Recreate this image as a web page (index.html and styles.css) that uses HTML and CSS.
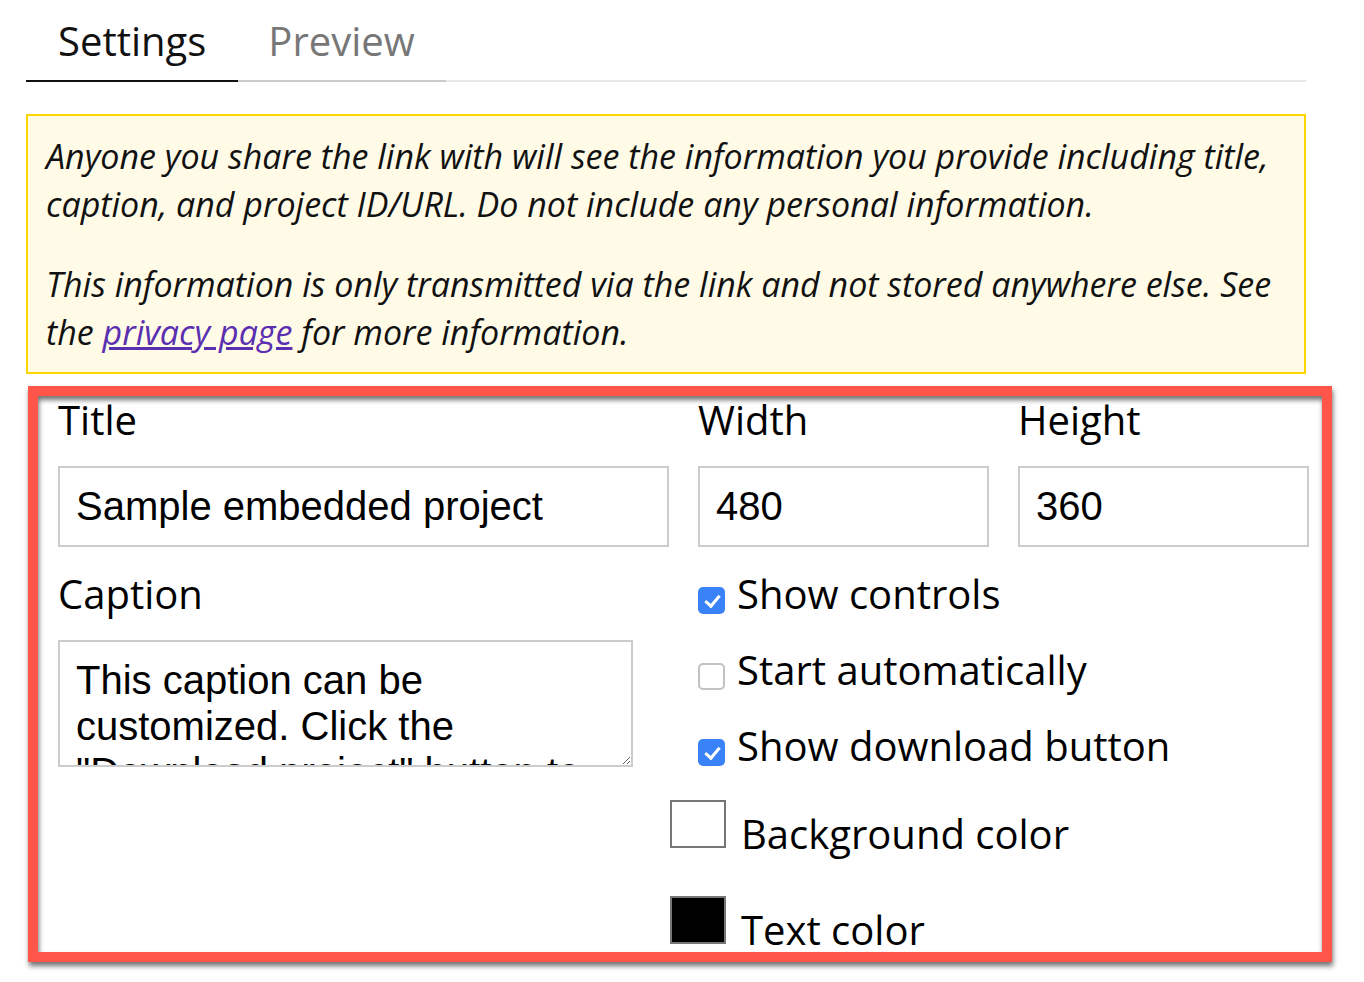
FILE: index.html
```html
<!DOCTYPE html>
<html lang="en">
<head>
<meta charset="utf-8">
<title>Embed settings</title>
<link rel="stylesheet" href="styles.css">
</head>
<body>
<main class="page">
  <nav class="tabs">
    <span class="tab tab-active">Settings</span>
    <span class="tab">Preview</span>
  </nav>

  <div class="notice">
    <p>Anyone you share the link with will see the information you provide including title, caption, and project ID/URL. Do not include any personal information.</p>
    <p>This information is only transmitted via the link and not stored anywhere else. See the <a class="notice-link" href="#privacy">privacy page</a> for more information.</p>
  </div>

  <form class="form">
    <div class="field">
      <label class="field-label" for="title">Title</label>
      <input class="text-input" id="title" type="text" value="Sample embedded project">
    </div>
    <div class="field">
      <label class="field-label" for="width">Width</label>
      <input class="text-input" id="width" type="text" value="480">
    </div>
    <div class="field">
      <label class="field-label" for="height">Height</label>
      <input class="text-input" id="height" type="text" value="360">
    </div>

    <div class="field">
      <label class="field-label" for="caption">Caption</label>
      <textarea class="text-area" id="caption">This caption can be customized. Click the "Download project" button to download the project.</textarea>
    </div>

    <div class="options">
      <label class="check-row"><input class="check" type="checkbox" checked><span>Show controls</span></label>
      <label class="check-row"><input class="check" type="checkbox"><span>Start automatically</span></label>
      <label class="check-row check-row-last"><input class="check" type="checkbox" checked><span>Show download button</span></label>
      <label class="color-row color-row-first"><input class="swatch" type="color" value="#ffffff"><span>Background color</span></label>
      <label class="color-row"><input class="swatch" type="color" value="#000000"><span>Text color</span></label>
    </div>
  </form>

  <div class="highlight"></div>
</main>
</body>
</html>
```

FILE: styles.css
```css
html, body {
  margin: 0;
  padding: 0;
  background: #ffffff;
}

body {
  font-family: "Open Sans", "Noto Sans", sans-serif;
  color: #000;
  overflow: hidden;
}

.page {
  position: relative;
  width: 1280px;
  padding-left: 26px;
  height: 982px;
}

/* Tabs */
.tabs {
  display: flex;
  border-bottom: 2px solid #e8e8e8;
}

.tab {
  padding: 0 32px;
  height: 80px;
  line-height: 82px;
  font-size: 40px;
  color: #777777;
  border-bottom: 2px solid #cccccc;
  margin-bottom: -2px;
}

.tab + .tab {
  padding: 0 31px 0 30px;
}

.tab-active {
  color: #111111;
  border-bottom-color: #111111;
}

/* Notice */
.notice {
  margin-top: 32px;
  border: 2px solid #ffd500;
  background: #fffbe7;
  padding: 16px 18px;
  font-style: italic;
  font-size: 34px;
  line-height: 48px;
  color: #111;
}

.notice p {
  margin: 0;
}

.notice p + p {
  margin-top: 32px;
}

.notice-link {
  color: #5a2fb0;
  text-decoration: underline;
}

/* Form */
.form {
  margin-top: 19px;
  padding-left: 32px;
  display: grid;
  grid-template-columns: 611px 291px 291px;
  column-gap: 29px;
  row-gap: 20px;
  align-items: start;
}

.field-label {
  display: block;
  font-size: 40px;
  line-height: 54px;
  margin-bottom: 19px;
}

.text-input {
  box-sizing: border-box;
  display: block;
  width: 100%;
  height: 81px;
  margin: 0;
  padding: 0 16px;
  border: 2px solid #cccccc;
  border-radius: 0;
  font-family: "Liberation Sans", Arial, sans-serif;
  font-size: 40px;
  color: #000;
  background: #fff;
  outline: none;
}

.text-area {
  box-sizing: border-box;
  display: block;
  width: 575px;
  height: 127px;
  margin: 0;
  padding: 15px 16px;
  border: 2px solid #cccccc;
  border-radius: 0;
  font-family: "Liberation Sans", Arial, sans-serif;
  font-size: 40px;
  line-height: 46px;
  color: #000;
  background: #fff;
  overflow: hidden;
  outline: none;
}

/* Options */
.options {
  grid-column: 2 / 4;
  display: flex;
  flex-direction: column;
}

.check-row {
  display: flex;
  align-items: flex-start;
  height: 54px;
  font-size: 40px;
  line-height: 54px;
  margin-bottom: 22px;
}

.check-row-last {
  margin-bottom: 0;
}

.check {
  -webkit-appearance: none;
  appearance: none;
  position: relative;
  box-sizing: border-box;
  width: 27px;
  height: 27px;
  margin: 20px 12px 0 0;
  border: 2px solid #c2c2c2;
  border-radius: 5px;
  background: #ffffff;
  flex: none;
}

.check:checked {
  background: #3a82f7;
  border-color: #3a82f7;
}

.check:checked::after {
  content: "";
  position: absolute;
  left: 8px;
  top: 3px;
  width: 6px;
  height: 12px;
  border-right: 3px solid #fff;
  border-bottom: 3px solid #fff;
  transform: rotate(40deg);
}

.color-row {
  display: flex;
  align-items: flex-start;
  margin-left: -28px;
  height: 61px;
  font-size: 40px;
  line-height: 54px;
  margin-top: 35px;
}

.color-row-first {
  margin-top: 27px;
}

.color-row span {
  margin-top: 7px;
}

.swatch {
  -webkit-appearance: none;
  appearance: none;
  box-sizing: border-box;
  width: 56px;
  height: 48px;
  margin: 0 15px 0 0;
  padding: 0;
  border: 2px solid #767676;
  background: #fff;
  flex: none;
}

.swatch::-webkit-color-swatch-wrapper {
  padding: 0;
}

.swatch::-webkit-color-swatch {
  border: none;
}

/* Annotation overlay */
.highlight {
  position: absolute;
  left: 28px;
  top: 386px;
  width: 1284px;
  height: 556px;
  border: 10px solid #ff5649;
  box-shadow: 1px 4px 5px rgba(0, 0, 0, 0.55), inset 1px 4px 5px rgba(0, 0, 0, 0.55);
  pointer-events: none;
}
```
